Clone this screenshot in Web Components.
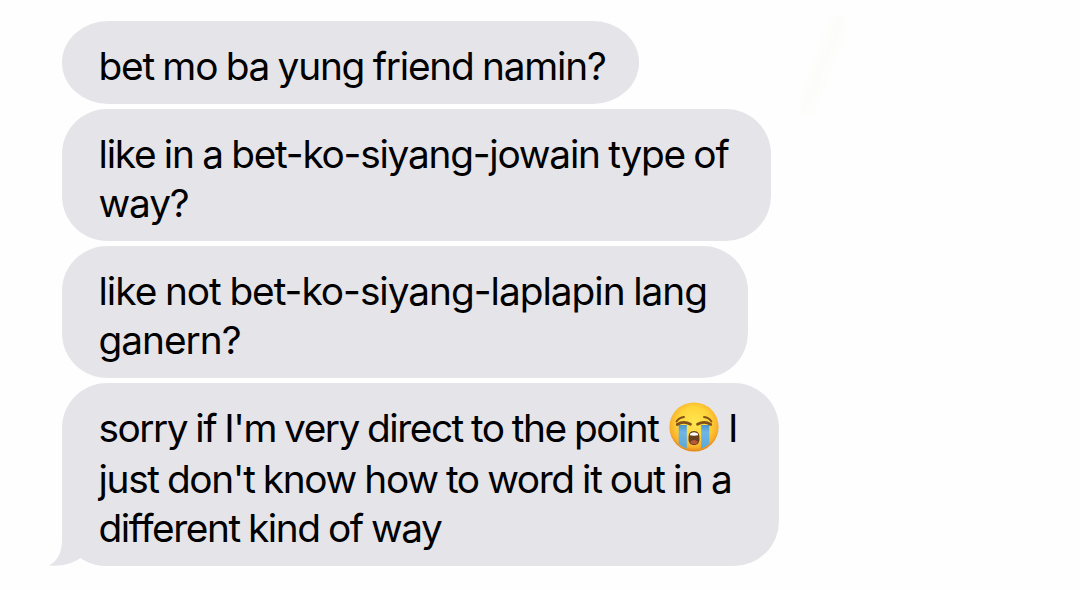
<!DOCTYPE html>
<html lang="fil">
<head>
<meta charset="utf-8">
<title>Messages</title>
<style>
html,body{margin:0;height:100%;background:#fefefe;overflow:hidden}
</style>
</head>
<body>
<message-thread>
  <chat-bubble style="--w:577px;--r:46px / 41.5px">
    <text-line fit="507">bet mo ba yung friend namin?</text-line>
  </chat-bubble>
  <chat-bubble style="--w:709px">
    <text-line fit="630">like in a bet-ko-siyang-jowain type of</text-line>
    <text-line fit="90">way?</text-line>
  </chat-bubble>
  <chat-bubble style="--w:686px">
    <text-line fit="608.5">like not bet-ko-siyang-laplapin lang</text-line>
    <text-line fit="142">ganern?</text-line>
  </chat-bubble>
  <chat-bubble tail style="--w:717px">
    <text-line fit="560" style="--h:51px">sorry if I'm very direct to the point<crying-face slot="after"></crying-face><span slot="after">I</span></text-line>
    <text-line fit="633">just don't know how to word it out in a</text-line>
    <text-line fit="343">different kind of way</text-line>
  </chat-bubble>
</message-thread>
<script>
const mount = (el, html) => { el.attachShadow({mode:'open'}).innerHTML = html; };

customElements.define('message-thread', class extends HTMLElement {
  constructor(){ super(); mount(this, `<style>
    :host{display:flex;flex-direction:column;align-items:flex-start;gap:5.2px;
      box-sizing:border-box;height:590px;padding:21px 0 0 62px;color:#000;
      font:400 38.8px/49px Inter,"Liberation Sans",sans-serif;
      background:
        linear-gradient(112deg,#fcfcfa00 32%,#fcfcfa 50%,#fcfcfa00 68%) 800px 15px / 45px 100px no-repeat,
        #fefefe}
  </style><slot></slot>`); }
});

customElements.define('chat-bubble', class extends HTMLElement {
  constructor(){ super(); mount(this, `<style>
    :host{display:flex;flex-direction:column;align-items:flex-start;position:relative;
      box-sizing:border-box;width:var(--w);padding:20px 0 13.8px 36.5px;
      background:#e5e4e9;border-radius:var(--r,45px)}
    :host(:not([tail])) svg{display:none}
    svg{position:absolute;left:-14px;bottom:0;width:60px;height:50px}
  </style>
  <svg viewBox="0 0 60 50"><path fill="#e5e4e9" d="M14 0V23C14 36 10 45 1 49.5C13 50.5 24 48 32.5 42C38 46 47 50 58 50V0Z"/></svg>
  <slot></slot>`); }
});

customElements.define('text-line', class extends HTMLElement {
  constructor(){ super(); mount(this, `<style>
    :host{display:flex;align-items:flex-start;position:relative;height:var(--h,49px);white-space:nowrap}
    .text{display:block;white-space:pre;word-spacing:-1.2px}
    ::slotted(span){margin-left:9px}
  </style><span class="text"><slot></slot></span><slot name="after"></slot>`); }
  connectedCallback(){
    const text = this.shadowRoot.querySelector('.text');
    const count = this.firstChild.textContent.trim().length;
    const width = text.getBoundingClientRect().width;
    text.style.letterSpacing = (Number(this.getAttribute('fit')) - width) / count + 'px';
  }
});

customElements.define('crying-face', class extends HTMLElement {
  constructor(){ super(); mount(this, `<style>
    :host{display:block;width:50px;height:50px;margin:-1px 0 0 10.5px}
    svg{display:block}
  </style>
  <svg width="50" height="50" viewBox="0 0 50 50">
    <defs>
      <radialGradient id="f" cx=".5" cy=".42" r=".58"><stop offset="0" stop-color="#ffe64f"/><stop offset=".55" stop-color="#ffd53a"/><stop offset=".85" stop-color="#f9b02a"/><stop offset="1" stop-color="#e38419"/></radialGradient>
      <linearGradient id="t" x2="0" y2="1"><stop offset="0" stop-color="#4b93c8"/><stop offset=".3" stop-color="#6fb6e6"/><stop offset="1" stop-color="#5aa6da"/></linearGradient>
    </defs>
    <circle cx="25" cy="25" r="24.6" fill="url(#f)"/>
    <path d="M9.7 23H17.8V46.8Q13.5 45 9.7 42ZM32.2 23H40.3V42Q36.5 45 32.2 46.8Z" fill="url(#t)"/>
    <g fill="none" stroke="#82501b" stroke-linecap="round">
      <path stroke-width="1.8" d="M7.5 19.5Q10 15.5 15 15M42.5 19.5Q40 15.5 35 15"/>
      <path stroke-width="2.7" d="M8.2 22.5Q14.5 18.5 21.5 22.3M41.8 22.5Q35.5 18.5 28.5 22.3"/>
    </g>
    <path fill="#68401e" d="M25 29C29.3 29 30.5 32 30.5 36.5C30.5 41 28.5 43 25 43S19.5 41 19.5 36.5C19.5 32 20.7 29 25 29Z"/>
    <path fill="#fff" d="M21 31.8Q25 28.8 29 31.8V33.3Q25 34.2 21 33.3Z"/>
    <path fill="#b9583f" d="M21 40Q25 36 29 40Q27.8 42.3 25 42.3T21 40Z"/>
  </svg>`); }
});
</script>
</body>
</html>
